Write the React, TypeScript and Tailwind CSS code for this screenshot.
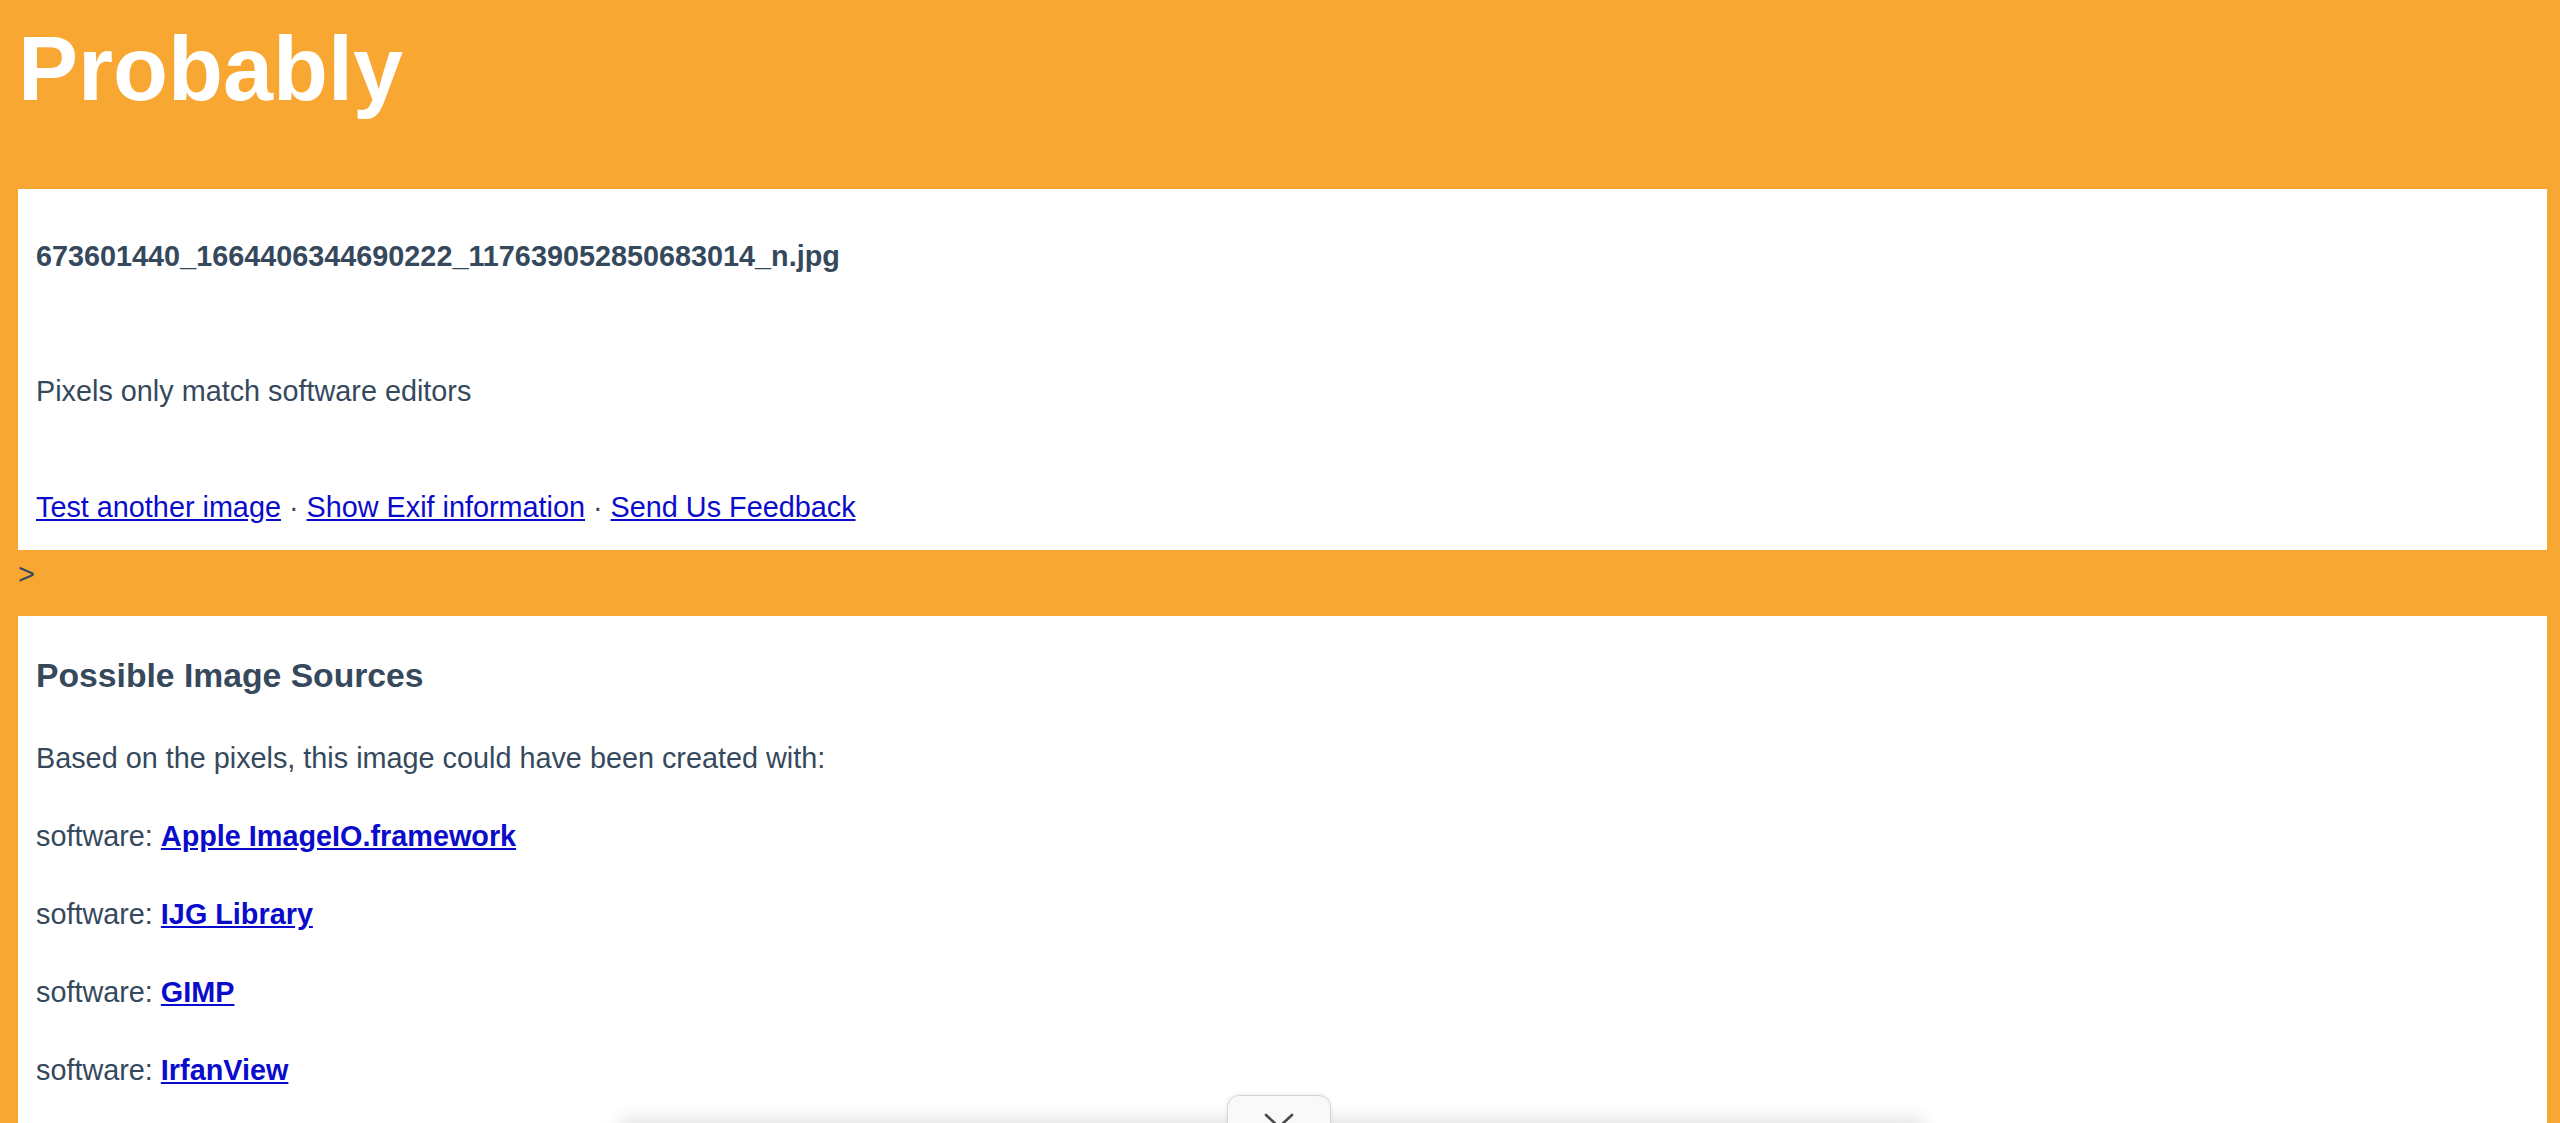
import React from "react";

const sources = ["Apple ImageIO.framework", "IJG Library", "GIMP", "IrfanView"];

function ChevronDown() {
  return (
    <svg width="30" height="16" viewBox="0 0 30 16" fill="none" stroke="#4a4a4a" strokeWidth="2.6" strokeLinecap="round" strokeLinejoin="round">
      <path d="M2 2 L15 14 L28 2" />
    </svg>
  );
}

export default function App() {
  return (
    <div
      className="relative h-[1123px] overflow-hidden bg-[#f9a733] text-[#36495c]"
      style={{ fontFamily: '"Liberation Sans", Arial, sans-serif' }}
    >
      <h1 className="ml-[18px] pt-[18px] text-[90px] font-bold leading-[1.15] text-white">Probably</h1>

      {/* result card */}
      <section className="ml-[18px] mr-[13px] mt-[67px] bg-white px-[18px] pt-[43px] pb-[18px] text-[28.8px] leading-[49px]">
        <h4 className="font-bold">673601440_1664406344690222_117639052850683014_n.jpg</h4>
        <p className="mt-[86px]">Pixels only match software editors</p>
        <p className="mt-[67px]">
          <a href="#" className="text-[#0b0bcc] underline">Test another image</a>
          {" · "}
          <a href="#" className="text-[#0b0bcc] underline">Show Exif information</a>
          {" · "}
          <a href="#" className="text-[#0b0bcc] underline">Send Us Feedback</a>
        </p>
      </section>

      <div className="ml-[18px] h-[66px] text-[28.8px] leading-[49px]">&gt;</div>

      {/* sources card */}
      <section className="ml-[18px] mr-[13px] bg-white px-[18px] pt-[35px] pb-[40px] text-[28.8px] leading-[49px]">
        <h3 className="text-[33.7px] font-bold leading-[49px]">Possible Image Sources</h3>
        <p className="mt-[34px]">Based on the pixels, this image could have been created with:</p>
        {sources.map((s) => (
          <p key={s} className="mt-[29px]">
            software:{" "}
            <a href="#" className="font-bold text-[#0b0bcc] underline">
              {s}
            </a>
          </p>
        ))}
      </section>

      {/* docked banner, collapsed below the fold */}
      <div className="absolute left-[620px] top-[1123px] h-[60px] w-[1303px] bg-white shadow-[0_-4px_18px_rgba(0,0,0,0.12)]" />
      <button className="absolute left-[1227px] top-[1095px] flex h-[50px] w-[104px] justify-center rounded-t-[12px] border border-[#d6d6d6] bg-[#f9f9f9] pt-[17px] shadow-[0_-1px_4px_rgba(0,0,0,0.08)]">
        <ChevronDown />
      </button>
    </div>
  );
}
